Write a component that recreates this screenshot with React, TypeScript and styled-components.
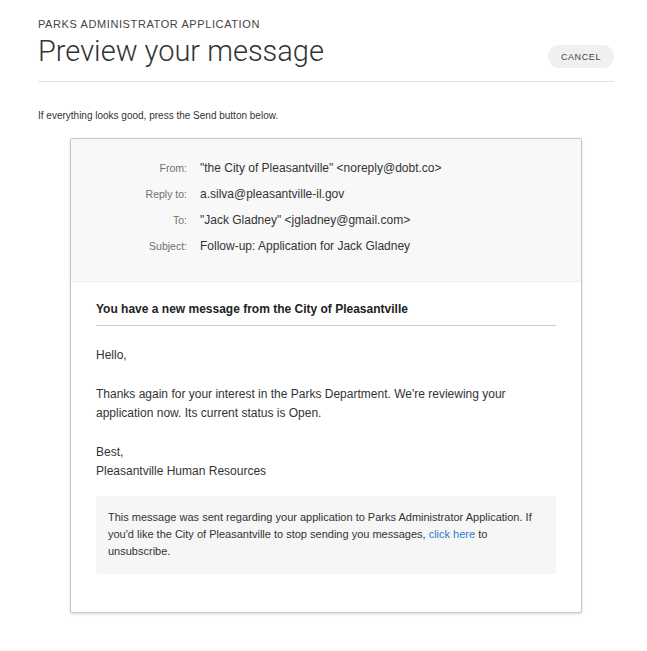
import React from 'react';
import styled, { createGlobalStyle } from 'styled-components';

const GlobalStyle = createGlobalStyle`
  html, body {
    margin: 0;
    padding: 0;
    background: #ffffff;
  }
  body {
    font-family: 'Liberation Sans', Arial, sans-serif;
    color: #333333;
  }
`;

const Page = styled.div`
  width: 576px;
  padding: 17px 0 40px 38px;
`;

const Header = styled.header`
  display: flex;
  align-items: flex-end;
  justify-content: space-between;
  padding-bottom: 12px;
  border-bottom: 1px solid #e3e3e3;
`;

const TitleBlock = styled.div`
  display: flex;
  flex-direction: column;
`;

const Eyebrow = styled.div`
  font-size: 11px;
  letter-spacing: 0.6px;
  text-transform: uppercase;
  color: #444444;
  line-height: 14px;
`;

const Title = styled.h1`
  margin: 2px 0 0;
  font-family: Roboto, 'Liberation Sans', sans-serif;
  font-weight: 300;
  font-size: 29px;
  line-height: 36px;
  color: #333333;
`;

const CancelButton = styled.button`
  border: none;
  background: #f0f0f0;
  border-radius: 12px;
  height: 23px;
  padding: 0 13px;
  margin-bottom: 1px;
  font-family: 'Liberation Sans', Arial, sans-serif;
  font-size: 9px;
  letter-spacing: 0.6px;
  color: #444444;
  cursor: pointer;
`;

const Intro = styled.p`
  margin: 28px 0 0;
  font-size: 10px;
  color: #333333;
`;

const Card = styled.div`
  width: 510px;
  margin: 17px auto 0;
  border: 1px solid #c6c6c6;
  border-radius: 2px;
  box-shadow: 0 1px 3px rgba(0, 0, 0, 0.15);
  background: #ffffff;
`;

const Meta = styled.div`
  background: #f8f8f8;
  padding: 16px 0 22px;
  border-bottom: 1px solid #eeeeee;
  display: grid;
  grid-template-columns: 116px 1fr;
  column-gap: 13px;
`;

const MetaLabel = styled.div`
  text-align: right;
  font-size: 10.5px;
  color: #707070;
  line-height: 26px;
`;

const MetaValue = styled.div`
  font-size: 12px;
  color: #333333;
  line-height: 26px;
`;

const Body = styled.div`
  padding: 20px 25px 38px;
`;

const MessageHeading = styled.div`
  font-weight: bold;
  font-size: 12px;
  color: #222222;
  padding-bottom: 9px;
  border-bottom: 1px solid #cccccc;
`;

const Paragraph = styled.p`
  margin: 20px 0 0;
  font-size: 12px;
  line-height: 19px;
  color: #333333;
`;

const Notice = styled.p`
  margin: 15px 0 0;
  background: #f6f6f6;
  border-radius: 2px;
  padding: 13px 12px 14px;
  font-size: 11px;
  line-height: 17px;
  color: #333333;
`;

const Link = styled.a`
  color: #2d7bd1;
  text-decoration: none;
`;

const meta = [
  { label: 'From:', value: '"the City of Pleasantville" <noreply@dobt.co>' },
  { label: 'Reply to:', value: 'a.silva@pleasantville-il.gov' },
  { label: 'To:', value: '"Jack Gladney" <jgladney@gmail.com>' },
  { label: 'Subject:', value: 'Follow-up: Application for Jack Gladney' },
];

export default function App() {
  return (
    <>
      <GlobalStyle />
      <Page>
        <Header>
          <TitleBlock>
            <Eyebrow>Parks Administrator Application</Eyebrow>
            <Title>Preview your message</Title>
          </TitleBlock>
          <CancelButton>CANCEL</CancelButton>
        </Header>
        <Intro>If everything looks good, press the Send button below.</Intro>
        <Card>
          <Meta>
            {meta.map((row) => (
              <React.Fragment key={row.label}>
                <MetaLabel>{row.label}</MetaLabel>
                <MetaValue>{row.value}</MetaValue>
              </React.Fragment>
            ))}
          </Meta>
          <Body>
            <MessageHeading>You have a new message from the City of Pleasantville</MessageHeading>
            <Paragraph>Hello,</Paragraph>
            <Paragraph>
              Thanks again for your interest in the Parks Department. We're reviewing your
              application now. Its current status is Open.
            </Paragraph>
            <Paragraph>
              Best,
              <br />
              Pleasantville Human Resources
            </Paragraph>
            <Notice>
              This message was sent regarding your application to Parks Administrator Application. If
              you'd like the City of Pleasantville to stop sending you messages,{' '}
              <Link href="#">click here</Link> to
              <br />
              unsubscribe.
            </Notice>
          </Body>
        </Card>
      </Page>
    </>
  );
}
